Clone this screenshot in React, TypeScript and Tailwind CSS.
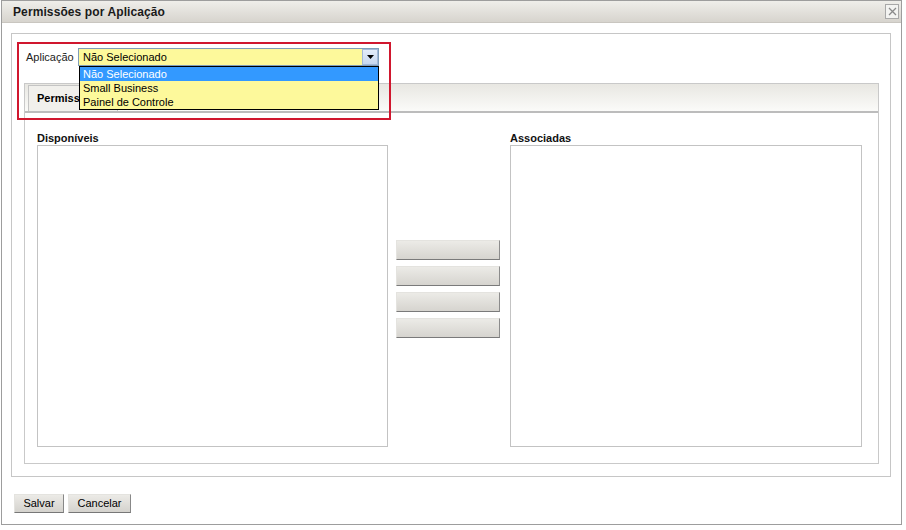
import React from "react";

function GrayBtn({ className = "" }: { className?: string }) {
  return (
    <div
      className={
        "h-[20px] w-[104px] border border-t-[#e4e3df] border-l-[#e4e3df] border-r-[#8c8c8c] border-b-[#7a7a7a] bg-gradient-to-b from-[#ecebe7] to-[#d6d4cf] " +
        className
      }
    />
  );
}

export default function App() {
  return (
    <div className="w-[906px] h-[530px] bg-white font-['Liberation_Sans',Arial,sans-serif] text-[11px] text-black overflow-hidden">
      <div className="ml-px w-[901px] h-[525px] border border-[#9d9d9d] flex flex-col">
        {/* Title bar */}
        <div className="h-[22px] flex items-center justify-between bg-gradient-to-b from-[#efeeea] to-[#d7d4ce] border-b border-[#c9c6c0] pl-[11px] pr-[2px]">
          <span className="font-bold text-[12px] text-[#1a1a1a] tracking-[0.1px]">Permissões por Aplicação</span>
          <div className="w-[14px] h-[15px] border border-[#a8a8a8] bg-[#f3f3f1] flex items-center justify-center">
            <svg width="9" height="9" viewBox="0 0 9 9">
              <path d="M1 1 L8 8 M8 1 L1 8" stroke="#8a8a8a" strokeWidth="1.3" />
            </svg>
          </div>
        </div>

        <div className="pl-[9px] pt-[10px]">
          {/* Main panel */}
          <div className="relative w-[880px] h-[444px] border border-[#c6c6c6] pl-[12px] pt-[14px]">
            <div className="flex items-center h-[18px]">
              <span className="ml-[2px] w-[52px] text-[#222]">Aplicação</span>
              <div className="w-[301px] h-[18px] border border-[#7f9db9] bg-[#fdf99b] flex items-center justify-between">
                <span className="pl-[4px]">Não Selecionado</span>
                <div className="w-[16px] h-[16px] border border-[#a3b9d9] bg-gradient-to-b from-[#e3ecf9] to-[#c7d7ef] flex items-center justify-center">
                  <svg width="7" height="4" viewBox="0 0 7 4">
                    <path d="M0 0 L7 0 L3.5 4 Z" fill="#000" />
                  </svg>
                </div>
              </div>
            </div>

            {/* Tab container */}
            <div className="mt-[17px] w-[855px] h-[381px] border border-[#c9c9c9] flex flex-col">
              <div className="h-[29px] flex items-end pl-[3px] bg-gradient-to-b from-[#e8e7e2] to-[#fbfbf9] border-b-2 border-[#bcbcbc]">
                <div className="h-[26px] w-[90px] pl-[8px] flex items-center border border-b-0 border-[#c4c4c4] bg-[#f1f0ec] font-bold">
                  <span className="block w-[42px] overflow-hidden whitespace-nowrap">Permissões</span>
                </div>
              </div>
              <div className="flex pl-[12px] pt-[18px]">
                <div className="flex flex-col">
                  <span className="font-bold text-[#111] h-[14px] leading-[14px]">Disponíveis</span>
                  <div className="w-[351px] h-[302px] border border-[#c3c3c3] bg-white" />
                </div>
                <div className="w-[122px] pl-[8px] pt-[109px] flex flex-col gap-[6px]">
                  <GrayBtn />
                  <GrayBtn />
                  <GrayBtn />
                  <GrayBtn />
                </div>
                <div className="flex flex-col">
                  <span className="font-bold text-[#111] h-[14px] leading-[14px]">Associadas</span>
                  <div className="w-[352px] h-[302px] border border-[#c3c3c3] bg-white" />
                </div>
              </div>
            </div>

            {/* Dropdown list */}
            <div className="absolute left-[67px] top-[32px] w-[300px] h-[44px] border border-black bg-[#fdf99b] flex flex-col">
              <div className="h-[14px] leading-[14px] pl-[3px] bg-[#3399ff] text-white">Não Selecionado</div>
              <div className="h-[14px] leading-[14px] pl-[3px]">Small Business</div>
              <div className="h-[14px] leading-[14px] pl-[3px]">Painel de Controle</div>
            </div>

            {/* Red highlight */}
            <div className="absolute left-[5px] top-[8px] w-[374px] h-[78px] border-2 border-[#d0172e]" />
          </div>

          {/* Footer */}
          <div className="mt-[17px] ml-[3px] flex gap-[4px]">
            <div className="h-[19px] w-[50px] flex items-center justify-center border border-t-[#e4e3df] border-l-[#e4e3df] border-r-[#888] border-b-[#777] bg-gradient-to-b from-[#ecebe7] to-[#d4d2cd]">
              Salvar
            </div>
            <div className="h-[19px] w-[63px] flex items-center justify-center border border-t-[#e4e3df] border-l-[#e4e3df] border-r-[#888] border-b-[#777] bg-gradient-to-b from-[#ecebe7] to-[#d4d2cd]">
              Cancelar
            </div>
          </div>
        </div>
      </div>
    </div>
  );
}
